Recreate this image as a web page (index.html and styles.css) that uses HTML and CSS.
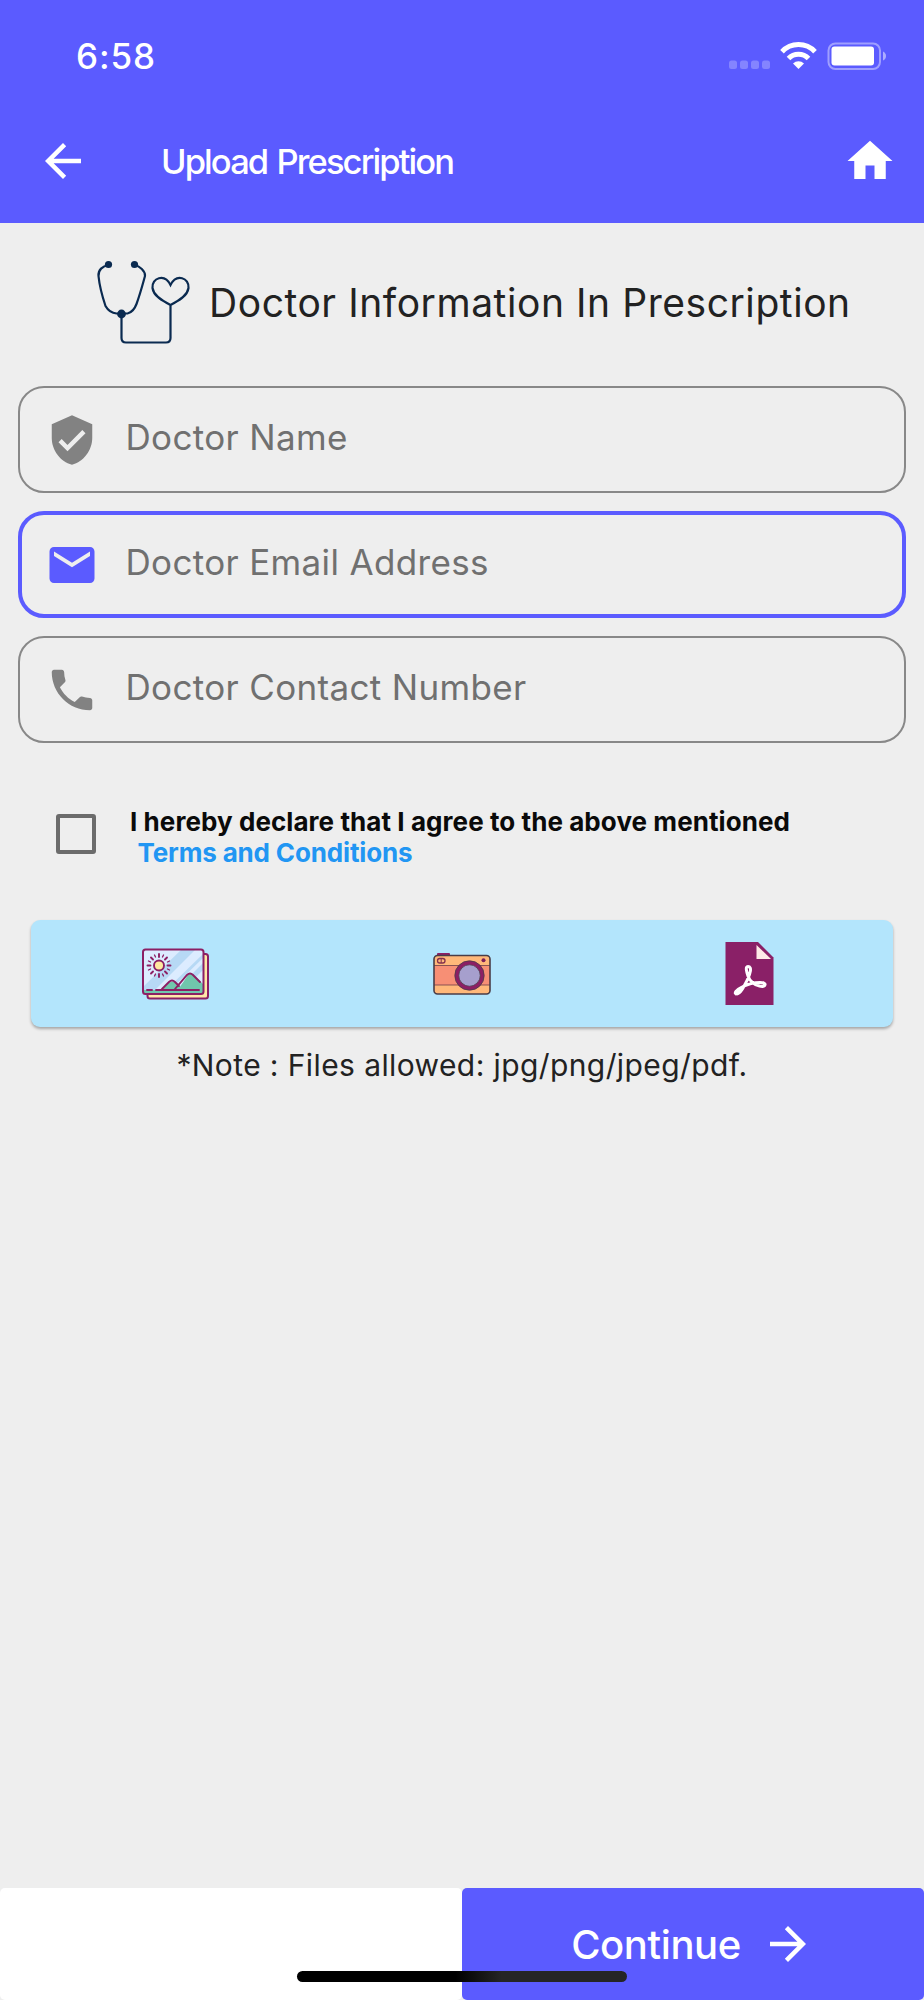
FILE: index.html
```html
<!DOCTYPE html>
<html lang="en">
<head>
<meta charset="utf-8">
<title>Upload Prescription</title>
<link rel="stylesheet" href="styles.css">
</head>
<body>
<div class="screen">
  <header class="header">
    <div class="status">
      <span class="time">6:58</span>
      <svg class="status-icons" width="160" height="28" viewBox="0 0 160 28">
        <g fill="#fff" opacity=".25"><rect x="1" y="18.500" width="8" height="8.500" rx="2.500"/><rect x="12" y="18.500" width="8" height="8.500" rx="2.500"/><rect x="23" y="18.500" width="8" height="8.500" rx="2.500"/><rect x="34" y="18.500" width="8" height="8.500" rx="2.500"/></g>
        <g fill="none" stroke="#fff" stroke-width="5"><path d="M54 9.800a22.500 22.500 0 0 1 33 0"/><path d="M60.500 16.500a14 14 0 0 1 20 0"/></g>
        <path fill="#fff" d="M65 21.500a8 8 0 0 1 11 0L70.500 27z"/>
        <rect x="100.500" y="1.500" width="51.500" height="25.500" rx="7" fill="none" stroke="#fff" stroke-opacity=".42" stroke-width="2"/>
        <rect x="103.500" y="4.500" width="42.500" height="19" rx="3" fill="#fff"/>
        <path d="M155 9.500q3 1.500 3 4.500t-3 4.500z" fill="#fff" opacity=".5"/>
      </svg>
    </div>
    <nav class="appbar">
      <svg class="icon" viewBox="0 0 24 24"><path d="M20 11H7.830l5.590-5.590L12 4l-8 8 8 8 1.410-1.410L7.830 13H20v-2z"/></svg>
      <h1 class="title">Upload Prescription</h1>
      <svg class="icon" viewBox="0 0 24 24"><path d="M10 20v-6h4v6h5v-8h3L12 3 2 12h3v8z"/></svg>
    </nav>
  </header>

  <main class="content">
    <div class="heading">
      <svg width="96" height="88" viewBox="0 0 96 88" fill="none" stroke="#0a2a50" stroke-width="2.200">
        <path d="M12.500 6C6.500 7 2 11 2.500 17C3.500 27 6.500 38 9.500 47Q13.500 54 20.500 54.500H31.500Q37.500 53 40.500 45C44.500 34 46.500 26 49 17C49.500 12 43.500 7 38.500 6"/>
        <path d="M25.500 56V79q0 4.500 4.500 4.500H70q4.500 0 4.500-4.500V46C66.500 42 57.500 37 56.500 29C55.500 19 68.500 14 74.500 26C80.500 14 93.500 19 92.500 29C91.500 37 82.500 42 74.500 46"/>
        <g fill="#0a2a50" stroke="none"><circle cx="12.500" cy="5.500" r="3.600"/><circle cx="38.500" cy="5.500" r="3.600"/><circle cx="25.500" cy="55" r="4.400"/></g>
      </svg>
      <h2 class="heading-text">Doctor Information In Prescription</h2>
    </div>

    <form class="fields">
      <label class="field"><svg class="icon" viewBox="0 0 24 24"><path d="M12 1L3 5v6c0 5.550 3.840 10.740 9 12 5.160-1.260 9-6.450 9-12V5l-9-4zm-2 16l-4-4 1.410-1.410L10 14.170l6.590-6.590L18 9l-8 8z"/></svg><span class="placeholder">Doctor Name</span></label>
      <label class="field field-focused"><svg class="icon" viewBox="0 0 24 24"><path d="M20 4H4c-1.100 0-1.990.9-1.990 2L2 18c0 1.100.9 2 2 2h16c1.100 0 2-.9 2-2V6c0-1.100-.9-2-2-2zm0 4l-8 5-8-5V6l8 5 8-5v2z"/></svg><span class="placeholder">Doctor Email Address</span></label>
      <label class="field"><svg class="icon" viewBox="0 0 24 24"><path d="M6.620 10.790c1.440 2.830 3.760 5.140 6.590 6.590l2.200-2.200c.27-.27.67-.36 1.020-.24 1.120.37 2.330.57 3.570.57.55 0 1 .45 1 1V20c0 .55-.45 1-1 1-9.390 0-17-7.610-17-17 0-.55.45-1 1-1h3.500c.55 0 1 .45 1 1 0 1.250.2 2.450.57 3.570.11.35.03.74-.25 1.020l-2.200 2.200z"/></svg><span class="placeholder">Doctor Contact Number</span></label>
    </form>

    <div class="consent">
      <span class="checkbox"></span>
      <p class="consent-text">I hereby declare that I agree to the above mentioned<br><a class="terms">Terms and Conditions</a></p>
    </div>

    <div class="sources">
      <svg class="gallery" width="68" height="54" viewBox="0 0 68 54">
        <rect x="5.500" y="6" width="60.500" height="44.500" rx="2.500" fill="#ffe8a8" stroke="#8c1f64" stroke-width="2"/>
        <rect x="1" y="1.500" width="60.500" height="44.500" rx="2.500" fill="#dcecff"/>
        <path d="M2 38L39 2h14L10 45H2zM31 45L61 15v7L38 45zM61 6v4L25 45h-4z" fill="#b7d9f5"/>
        <path d="M20 42l7-7q4-3.500 8 1l3 3L46 27q3-2.500 6 0l9 9v9H2v-3z" fill="#70c7ac"/>
        <rect x="1" y="1.500" width="60.500" height="44.500" rx="2.500" fill="none" stroke="#8c1f64" stroke-width="2"/>
        <g fill="none" stroke="#8c1f64" stroke-width="1.900" stroke-linecap="round"><path d="M5 42h5M14 42H57M20 41l7-7q3-3 6 0l4 4M33 41L45 27q3-3 6 0l7 7"/><circle cx="17" cy="17.500" r="5" fill="#ffe8a0"/><path d="M17 6v3M17 26v3M5.500 17.500h3M25.500 17.500h3M9 9.500l2 2M23 23.500l2 2M25 9.500l-2 2M11 23.500l-2 2"/><path stroke-width="1.300" d="M12.500 7l1 2M21.500 7l-1 2M12.500 28l1-2M21.500 28l-1-2M6.500 13l2 1M6.500 22l2-1M27.500 13l-2 1M27.500 22l-2-1"/></g>
      </svg>
      <svg width="58" height="44" viewBox="0 0 58 44">
        <rect x="4" y="1" width="13" height="4" rx="1" fill="#8c1f64"/>
        <rect x="1" y="3.500" width="56" height="38.500" rx="3.500" fill="#ffb87a"/>
        <path d="M1 13.500h56V33H1z" fill="#f78f75"/>
        <path d="M1 13.500h56M1 33h56" stroke="#6d3d49" stroke-width=".8"/>
        <rect x="1" y="3.500" width="56" height="38.500" rx="3.500" fill="none" stroke="#493d48" stroke-width="1.600"/>
        <rect x="4.500" y="6.500" width="7.500" height="4.500" rx="2.200" fill="none" stroke="#84304d" stroke-width="1.300"/><path d="M8.200 6.500v4.500" stroke="#84304d"/>
        <circle cx="50.500" cy="8.300" r="2" fill="#7d1e59"/>
        <circle cx="36.500" cy="23.500" r="12.700" fill="#a69fcd" stroke="#8c1f64" stroke-width="4"/><circle cx="36.500" cy="23.500" r="14.700" fill="none" stroke="#493d48" stroke-width=".8"/><circle cx="36.500" cy="23.500" r="10.700" fill="none" stroke="#493d48" stroke-width=".7"/>
      </svg>
      <svg width="49" height="63" viewBox="0 0 49 63">
        <path d="M.5 0H33l15.500 15.500V63H.5z" fill="#8a2067"/><path d="M31.500 3v14H46z" fill="#fee9e7"/>
        <path d="M23 24.500c4.500 0 2 8-.5 13-3 6-7 14.500-10.500 14.500-4 0-.5-4.500 5-7 6-3 12-4.500 18-4.500 8 0 5.500 5-.5 3.500-5-1-10-5-11.500-10-1.300-4-3-9.500 0-9.500z" fill="none" stroke="#fff" stroke-width="3"/><path d="M11 52q0-3 5-5l-1 3z" fill="#fff" stroke="#fff" stroke-width="2"/>
      </svg>
    </div>
    <p class="note">*Note : Files allowed: jpg/png/jpeg/pdf.</p>
  </main>

  <footer class="footer">
    <div class="footer-blank"></div>
    <button class="continue" type="button">Continue<svg class="icon" viewBox="0 0 24 24"><path d="M12 4l-1.410 1.410L16.170 11H4v2h12.170l-5.580 5.590L12 20l8-8z"/></svg></button>
    <div class="home-indicator"></div>
  </footer>
</div>
</body>
</html>
```
FILE: styles.css
```css
* { box-sizing: border-box; }
body { margin: 0; background: #eee; font-family: Inter, "Liberation Sans", sans-serif; }
h1, h2, p { margin: 0; font-weight: 400; }
.screen { width: 924px; height: 2000px; display: flex; flex-direction: column; }
.icon { width: 54px; height: 54px; fill: currentColor; flex: none; display: block; }

.header { height: 223px; background: #5b5bff; color: #fff; flex: none; }
.status { height: 112px; padding: 0 36px 0 76px; display: flex; align-items: center; justify-content: space-between; }
.time { font-size: 35px; font-weight: 500; letter-spacing: .9px; }
.status-icons { display: block; }
.appbar { height: 98px; padding: 0 27px 0 36px; display: flex; align-items: center; }
.title { flex: 1; margin-left: 71px; font-size: 34.5px; font-weight: 500; letter-spacing: -1.9px; word-spacing: 2px; }

.content { flex: 1; }
.heading { display: flex; height: 163px; padding: 0 0 4px 96px; align-items: center; gap: 17px; }
.heading-text { font-size: 39px; letter-spacing: .56px; color: #222; white-space: nowrap; }
.fields { display: grid; gap: 18px; padding: 0 18px; }
.field { height: 107px; border: 2px solid #888; border-radius: 26px; padding-left: 24.5px; display: flex; align-items: center; gap: 27px; font-size: 35px; letter-spacing: .34px; color: #707070; }
.placeholder { padding-bottom: 5px; }
.field .icon { color: #828282; }
.field-focused { border: 4px solid #5b5bff; padding-left: 22.5px; }
.field-focused .icon { color: #5b5bff; }

.consent { display: flex; margin-top: 61px; padding-left: 56px; gap: 34px; height: 116px; }
.checkbox { width: 40px; height: 40px; margin-top: 10px; border: 4px solid #6b6b6b; border-radius: 3px; }
.consent-text { padding-top: 2px; font-size: 26px; line-height: 31px; font-weight: 700; letter-spacing: .07px; color: #0a0a0a; white-space: nowrap; }
.terms { color: #2196f3; margin-left: 7.5px; letter-spacing: -.15px; }
.sources { height: 107px; margin: 0 31px; border-radius: 9px; background: #b3e5fc; box-shadow: 0 2px 3px rgba(0,0,0,.3); display: grid; grid-template-columns: repeat(3, 1fr); place-items: center; }
.sources svg { display: block; }
.sources .gallery { margin: 2px 0 0 2px; }
.note { margin-top: 20px; font-size: 30px; letter-spacing: .4px; text-align: center; color: #222; }

.footer { height: 112px; display: flex; position: relative; flex: none; }
.footer-blank, .continue { width: 462px; height: 112px; border-radius: 5px; }
.footer-blank { background: #fff; }
.continue { background: #5b5bff; color: #fff; border: 0; padding: 0; display: flex; align-items: center; justify-content: center; gap: 20px; font: 500 40px Inter, "Liberation Sans", sans-serif; letter-spacing: -.4px; }
.home-indicator { position: absolute; left: 297px; top: 83px; width: 330px; height: 11px; border-radius: 6px; background: linear-gradient(90deg, #000 48%, #252525 62%); }
```
